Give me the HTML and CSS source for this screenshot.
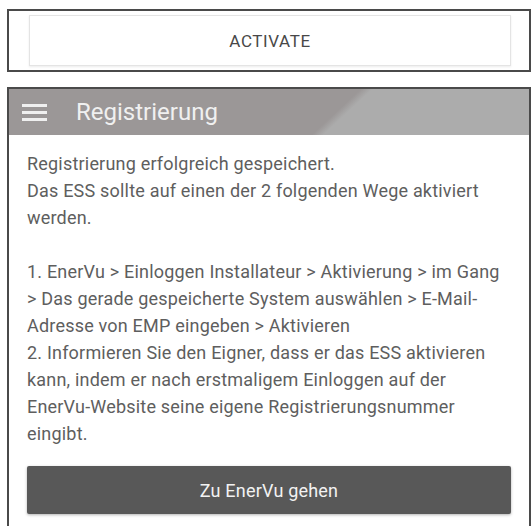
FILE: index.html
```html
<!DOCTYPE html>
<html lang="de">
<head>
    <meta charset="UTF-8">
    <meta name="viewport" content="width=device-width, initial-scale=1.0">
    <title>Registrierung</title>
    <link rel="stylesheet" href="styles.css">
</head>
<body>

    <!-- Activate step -->
    <div class="activate-box">
        <button class="activate-btn">ACTIVATE</button>
    </div>

    <!-- Registration screen -->
    <div class="screen">
        <div class="app-bar">
            <span class="menu-icon">
                <span></span>
                <span></span>
                <span></span>
            </span>
            <h1>Registrierung</h1>
        </div>

        <div class="content">
            <p>Registrierung erfolgreich gespeichert.<br>
            Das ESS sollte auf einen der 2 folgenden Wege aktiviert<br>
            werden.</p>

            <p>1. EnerVu &gt; Einloggen Installateur &gt; Aktivierung &gt; im Gang<br>
            &gt; Das gerade gespeicherte System auswählen &gt; E-Mail-<br>
            Adresse von EMP eingeben &gt; Aktivieren<br>
            2. Informieren Sie den Eigner, dass er das ESS aktivieren<br>
            kann, indem er nach erstmaligem Einloggen auf der<br>
            EnerVu-Website seine eigene Registrierungsnummer<br>
            eingibt.</p>

            <button class="go-btn">Zu EnerVu gehen</button>
        </div>
    </div>

</body>
</html>
```

FILE: styles.css
```css
/* General Styles */
* {
    margin: 0;
    padding: 0;
    box-sizing: border-box;
    font-family: Roboto, "Liberation Sans", sans-serif;
}

html {
    overflow: hidden;
}

body {
    background-color: #fff;
}

/* Activate box */
.activate-box {
    margin: 9px 1px 0 7px;
    border: 2px solid #4a4a4a;
    padding: 4px 18px 4px 20px;
}

.activate-btn {
    display: block;
    width: 100%;
    height: 51px;
    background: #fff;
    border: 1px solid #e4e4e4;
    box-shadow: 0 1px 2px rgba(0, 0, 0, 0.08);
    color: #484848;
    font-size: 17px;
    letter-spacing: 0.6px;
}

/* Registration screen */
.screen {
    margin: 15px 1px 0 7px;
    border: 2px solid #4a4a4a;
    border-bottom: none;
    padding-bottom: 20px;
}

.app-bar {
    display: flex;
    align-items: center;
    height: 46px;
    padding-left: 13px;
    background: linear-gradient(137deg, #9b9797 240px, #acacac 248px);
}

.menu-icon {
    display: flex;
    flex-direction: column;
    gap: 4px;
    width: 25px;
    margin-right: 29px;
}

.menu-icon span {
    display: block;
    height: 3px;
    background: #efefef;
}

.app-bar h1 {
    font-size: 24px;
    font-weight: normal;
    color: #f0f0f0;
}

.content {
    padding: 15px 18px 0 18px;
}

.content p {
    font-size: 18px;
    line-height: 27px;
    letter-spacing: 0.2px;
    color: #5e5e5e;
    white-space: nowrap;
    margin-bottom: 27px;
}

.content p:last-of-type {
    margin-bottom: 19px;
}

.go-btn {
    display: block;
    width: 100%;
    height: 48px;
    background-color: #585858;
    border: none;
    border-radius: 2px;
    box-shadow: 0 1px 3px rgba(0, 0, 0, 0.3);
    color: #f2f2f2;
    font-size: 18px;
    letter-spacing: 0.2px;
}
```
